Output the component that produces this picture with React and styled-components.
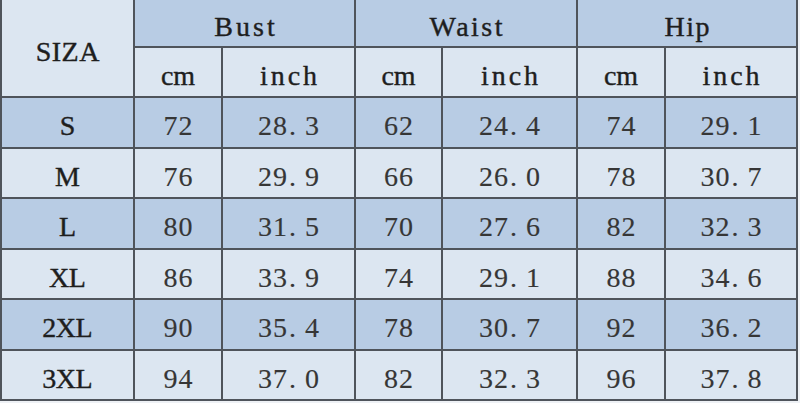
import React from 'react';
import styled, { createGlobalStyle } from 'styled-components';

const GlobalStyle = createGlobalStyle`
    html, body {
        margin: 0;
        padding: 0;
        background: #eef1f5;
        overflow: hidden;
    }
`

const Table = styled.div`
    width: 798px;
    margin-top: -2px;
    display: grid;
    grid-template-columns: 131px 86px 131px 85px 133px 86px 130px;
    grid-template-rows: 46px 48px repeat(3, 49px 48px);
    gap: 2px;
    padding: 2px;
    box-sizing: border-box;
    background: #4f545b;
    font-family: "Liberation Serif", "Times New Roman", serif;
`
const Cell = styled.div`
    display: flex;
    align-items: center;
    justify-content: center;
    background: ${props => props.$dark ? '#b8cce4' : '#dce6f1'};
    color: ${props => props.$strong ? '#1e1e1e' : '#363636'};
    -webkit-text-stroke: ${props => props.$strong ? '0.4px #1e1e1e' : '0.15px #363636'};
    font-size: 28px;
    letter-spacing: ${props => props.$spacing || '1px'};
    text-indent: ${props => props.$spacing || '1px'};
    padding-top: 7px;
    box-sizing: border-box;
    grid-row: ${props => props.$rows ? `span ${props.$rows}` : 'auto'};
    grid-column: ${props => props.$cols ? `span ${props.$cols}` : 'auto'};
`
const Dot = styled.span`
    margin-right: 7px;
`

const units = ['cm', 'inch', 'cm', 'inch', 'cm', 'inch'];
const unitSpacing = { cm: '0px', inch: '3px' };

const rows = [
    ['S', '72', '28.3', '62', '24.4', '74', '29.1'],
    ['M', '76', '29.9', '66', '26.0', '78', '30.7'],
    ['L', '80', '31.5', '70', '27.6', '82', '32.3'],
    ['XL', '86', '33.9', '74', '29.1', '88', '34.6'],
    ['2XL', '90', '35.4', '78', '30.7', '92', '36.2'],
    ['3XL', '94', '37.0', '82', '32.3', '96', '37.8'],
]

const Num = ({ value }) => {
    const [whole, frac] = value.split('.');
    if (frac === undefined) return whole;
    return <>{whole}<Dot>.</Dot>{frac}</>;
}

const App = () => {

    return (
        <>
            <GlobalStyle />
            <Table>
                <Cell $rows={2} $strong $spacing='0.5px'>SIZA</Cell>
                <Cell $cols={2} $dark $strong $spacing='3px'>Bust</Cell>
                <Cell $cols={2} $dark $strong $spacing='2.5px'>Waist</Cell>
                <Cell $cols={2} $dark $strong $spacing='1.5px'>Hip</Cell>
                {units.map((unit, i) => (
                    <Cell key={i} $strong $spacing={unitSpacing[unit]}>{unit}</Cell>
                ))}
                {rows.map((row, r) => row.map((value, c) => (
                    c === 0
                        ? <Cell key={`${r}-${c}`} $dark={r % 2 === 0} $strong $spacing='-0.5px'>{value}</Cell>
                        : <Cell key={`${r}-${c}`} $dark={r % 2 === 0}><Num value={value} /></Cell>
                )))}
            </Table>
        </>
    )
}

export default App;
